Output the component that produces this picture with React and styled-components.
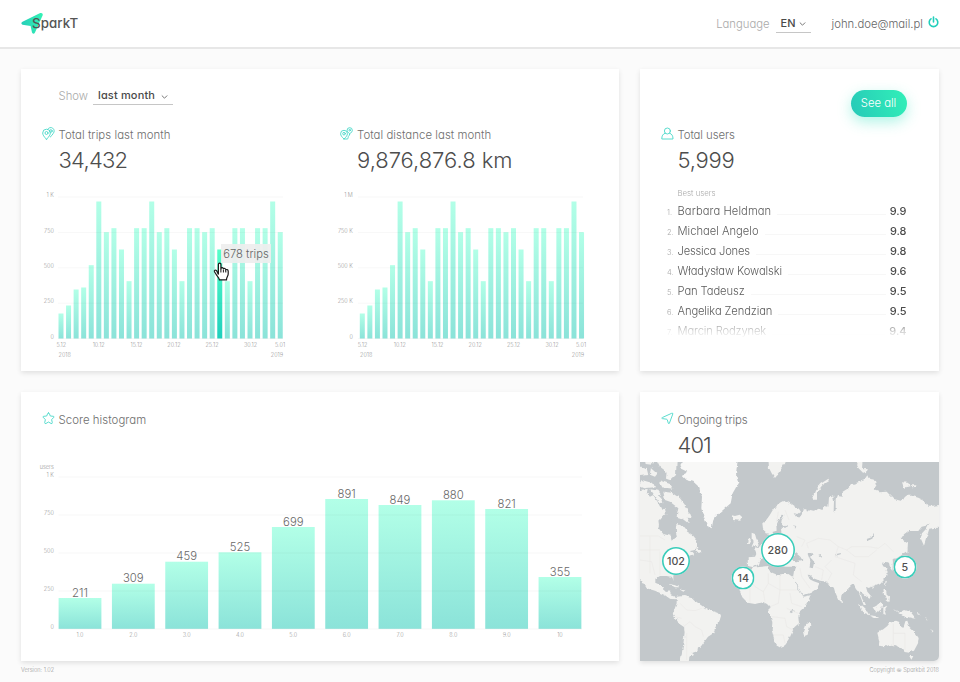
import React from "react";
import styled, { createGlobalStyle } from "styled-components";

const GlobalStyle = createGlobalStyle`
  * { box-sizing: border-box; }
  body {
    margin: 0;
    background: #fbfbfb;
    color: #777;
    font-family: Inter, "Open Sans", sans-serif;
    font-feature-settings: "cv11" 1;
    font-weight: 300;
    font-size: 11px;
    overflow: hidden;
  }
`;

const Page = styled.div`
  width: 960px;
  height: 682px;
  display: flex;
  flex-direction: column;
`;

const Header = styled.header`
  height: 49px;
  flex: none;
  display: flex;
  align-items: center;
  padding: 0 21px;
  background: #fff;
  border-bottom: 2px solid #e7e7e7;
`;

const Logo = styled.div`
  display: flex;
  align-items: center;
  height: 24px;
  margin-right: auto;
`;

const LogoMark = styled.svg`
  width: 23px;
  height: 23px;
  margin-right: -12px;
`;

const LogoText = styled.span`
  position: relative;
  top: -1px;
  color: #555;
  font-size: 13.3px;
  font-weight: 500;
  letter-spacing: 0.1px;
`;

const Label = styled.span`
  color: #aaa;
  font-size: 11.3px;
  letter-spacing: 0;
`;

const Select = styled.button`
  display: flex;
  align-items: center;
  justify-content: space-between;
  width: ${(p) => p.$width}px;
  height: 18px;
  margin-left: ${(p) => p.$gap}px;
  padding: 0 5px 1px 5px;
  border: 0;
  border-bottom: 1px solid #c6c6c6;
  background: none;
  color: #4a4a4a;
  font: 500 11px/16px Inter, sans-serif;
  font-feature-settings: "cv11" 1;
  letter-spacing: ${(p) => p.$spacing || "0"};
`;

const Chevron = styled.svg`
  width: 7px;
  height: 6px;
  margin-top: 3px;
  fill: none;
  stroke: #777;
`;

const Email = styled.span`
  margin-left: 21px;
  color: #666;
  font-size: 11.3px;
`;

const Power = styled.svg`
  width: 11px;
  height: 12px;
  margin: -3px 0 0 5px;
  fill: none;
  stroke: #22cfbb;
  stroke-width: 1.6;
  stroke-linecap: round;
`;

const Dashboard = styled.main`
  display: grid;
  grid-template-columns: 598px 299px;
  grid-template-rows: 301.5px 269.5px;
  gap: 21px;
  padding: 20px 21px 0;
`;

const Card = styled.section`
  background: #fff;
  box-shadow: 0 2px 5px rgba(0, 0, 0, 0.11);
`;

const MapCard = styled(Card)`
  border-radius: 0 0 5px 0;
  overflow: hidden;
`;

const FilterRow = styled.div`
  display: flex;
  align-items: center;
  height: 18px;
  margin: 18px 0 20px;
  padding-left: 37.5px;
`;

const ActionRow = styled.div`
  display: flex;
  justify-content: flex-end;
  padding: 21px 32.5px 8px 0;
`;

const SeeAll = styled.button`
  width: 56px;
  height: 27px;
  padding: 0;
  border: 0;
  border-radius: 14px;
  background: linear-gradient(70deg, #27c9b8, #31f0b8);
  box-shadow: 0 5px 14px rgba(48, 225, 190, 0.38);
  color: #fff;
  font: 300 11.3px/27px Inter, sans-serif;
  font-feature-settings: "cv11" 1;
`;

const Columns = styled.div`
  display: grid;
  grid-template-columns: 298.5px 299.5px;
`;

const Metric = styled.div`
  padding-top: ${(p) => p.$top || 0}px;
`;

const Heading = styled.h2`
  display: flex;
  align-items: center;
  height: 20px;
  margin: 0;
  padding-left: 20.5px;
  color: #6e6e6e;
  font-size: 11.4px;
  font-weight: 300;
  letter-spacing: ${(p) => p.$spacing || "0.05px"};
`;

const Icon = styled.svg`
  width: 13px;
  height: 13px;
  margin: -3px 4px 0 0;
  fill: none;
  stroke: #48d8c8;
  stroke-width: 0.9;
  stroke-linejoin: round;
  stroke-linecap: round;
`;

const Value = styled.div`
  height: 28px;
  margin-top: 1px;
  padding-left: 37.5px;
  color: #4d4d4d;
  font-size: 22px;
  font-weight: 350;
  line-height: 28px;
  letter-spacing: ${(p) => p.$spacing || "0"};
`;

const ChartBox = styled.div`
  position: relative;
  margin-top: ${(p) => p.$top}px;
`;

const ChartSvg = styled.svg`
  display: block;
  font-size: 5.5px;
  font-weight: 300;
  fill: #999;
`;

const GridLine = styled.line`
  stroke: #000;
  stroke-opacity: 0.03;
`;

const BarValue = styled.text`
  fill: #686868;
  font-size: 11.3px;
  text-anchor: middle;
`;

const Tooltip = styled.div`
  position: absolute;
  left: 200px;
  top: 62px;
  width: 50px;
  height: 19px;
  background: rgba(238, 238, 238, 0.92);
  color: #666;
  font-size: 11.2px;
  line-height: 21px;
  text-align: center;
  white-space: nowrap;
`;

const Pointer = styled.svg`
  position: absolute;
  left: 192px;
  top: 80px;
  width: 17px;
  height: 20px;
`;

const BestUsers = styled.div`
  margin: 14px 32.5px 0 22px;
  height: 153px;
  -webkit-mask-image: linear-gradient(#000 82%, transparent 98%);
  mask-image: linear-gradient(#000 82%, transparent 98%);
`;

const ListCaption = styled.div`
  padding-left: 15.5px;
  height: 13px;
  color: #aaa;
  font-size: 7.8px;
  line-height: 11px;
`;

const UserRow = styled.div`
  display: flex;
  align-items: baseline;
  height: 20px;
  line-height: 20px;
`;

const Rank = styled.span`
  width: 15.5px;
  padding-left: 5px;
  color: #aaa;
  font-size: 7.5px;
`;

const UserName = styled.span`
  color: #5c5c5c;
  font-size: 11.2px;
  letter-spacing: ${(p) => p.$spacing}px;
`;

const Leader = styled.span`
  flex: 1;
  margin: 0 4px 0 6px;
  border-bottom: 1px solid #f7f7f7;
`;

const Score = styled.span`
  color: #4a4a4a;
  font-size: 11px;
  font-weight: 500;
`;

const MapBox = styled.div`
  position: relative;
  margin-top: 3px;
  height: 199.5px;
  background: #c3c8cb;
`;

const MapSvg = styled.svg`
  display: block;
  width: 299px;
  height: 199px;
`;

const Land = styled.path`
  fill: ${(p) => (p.$ice ? "#f8f8f7" : "#f2f2f0")};
`;

const Water = styled.path`
  fill: #c3c8cb;
`;

const Border = styled.path`
  fill: none;
  stroke: #e9e7e5;
  stroke-width: 1.8;
`;

const Pin = styled.div`
  position: absolute;
  left: ${(p) => p.$x}px;
  top: ${(p) => p.$y}px;
  width: ${(p) => p.$size}px;
  height: ${(p) => p.$size}px;
  transform: translate(-50%, -50%);
  display: flex;
  align-items: center;
  justify-content: center;
  background: #fff;
  border-radius: 50%;
  box-shadow: inset 0 0 0 1.6px #3accb9;
  color: #505050;
  font-size: 10.7px;
  font-weight: 500;
`;

const Footer = styled.footer`
  display: flex;
  justify-content: space-between;
  padding: 5px 21px 0;
  color: #999;
  font-size: 5.6px;
  line-height: 8px;
`;

const Caret = () => (
  <Chevron viewBox="0 0 7 6"><path d="M.8 1.500 3.500 4.200 6.200 1.500" /></Chevron>
);

const TripsIcon = () => (
  <Icon viewBox="0 0 13 13">
    <path d="M4.500 12.300C1.900 9.600.700 7.900.700 6a3.800 3.800 0 0 1 7.600 0c0 1.900-1.200 3.600-3.800 6.300Z" />
    <circle cx="4.500" cy="6" r="1.500" />
    <path d="M5.600 2.300a3.500 3.500 0 1 1 5.700 4C10.600 7.700 9.600 8.900 8.300 10" />
    <circle cx="8.900" cy="4" r="1.300" />
  </Icon>
);

const DistanceIcon = () => (
  <Icon viewBox="0 0 13 13">
    <path d="M4 12C1.700 9.900.600 8.400.600 6.700a3.400 3.400 0 0 1 6.800 0c0 1.700-1.100 3.200-3.400 5.300Z" />
    <circle cx="4" cy="6.700" r="1.300" />
    <path d="M9.700 7C7.900 5.400 7.100 4.400 7.100 3.300a2.600 2.600 0 0 1 5.200 0c0 1.100-.8 2.100-2.600 3.700Z" />
    <circle cx="9.700" cy="3.200" r=".8" />
    <path d="M5 12h2.200c1.800 0 .3-2.600 1.700-3.200.7-.4.800-1 .8-1.500" />
  </Icon>
);

const UserIcon = () => (
  <Icon viewBox="0 0 13 13">
    <circle cx="6.400" cy="4" r="3" />
    <path d="M4.200 6.200C1.800 6.900.8 8.800.8 12h11.200c0-3.200-1-5.100-3.400-5.800" />
  </Icon>
);

const StarIcon = () => (
  <Icon viewBox="0 0 13 13">
    <path d="M6.500.900Q7.100.900 7.300 1.500L8.300 4 11.300 4.300Q12.600 4.600 11.700 5.600L9.600 7.500 10.300 10.600Q10.300 12 9.100 11.500L6.500 10 3.900 11.500Q2.700 12 2.700 10.600L3.400 7.500 1.300 5.600Q.4 4.600 1.700 4.300L4.700 4 5.700 1.500Q5.900.9 6.500.9Z" />
  </Icon>
);

const PlaneIcon = () => (
  <Icon viewBox="0 0 13 13">
    <path d="M11 1.200Q12.200.800 11.800 2L8.400 11.200Q7.900 12.400 7.300 11.200L6.300 7.800Q6.100 7.300 5.500 7.200L1.300 6.600Q0 6.200 1.200 5.600Z" />
  </Icon>
);

const tripTops = [
  400, 376, 328, 322, 255, 64, 156, 144, 208, 303, 144, 144, 64, 156, 144,
  208, 303, 144, 144, 156, 144, 208, 303, 144, 144, 303, 144, 144, 64, 156,
];

function DailyChart({ id, labels, barX, lineX, labelX, ticks, years, active }) {
  return (
    <ChartSvg width="299" height="185" viewBox="0 0 299 185">
      <defs>
        <linearGradient id={id} x1="0" y1="0" x2="0" y2="1">
          <stop stopColor="#b2ffe7" />
          <stop offset="1" stopColor="#8be3d9" />
        </linearGradient>
        <linearGradient id={id + "-active"} x1="0" y1="0" x2="0" y2="1">
          <stop stopColor="#57ffc9" />
          <stop offset="1" stopColor="#1fcfbc" />
        </linearGradient>
      </defs>
      {tripTops.map((t, i) => (
        <rect key={i} x={barX + i * 7.56} y={156.5 - (475 - t) / 3} width="5"
          height={(475 - t) / 3} fill={`url(#${id}${active === i ? "-active" : ""})`} />
      ))}
      {labels.map((l, i) => (
        <g key={l}>
          <GridLine x1={lineX} x2={lineX + 225} y1={15 + i * 35.4} y2={15 + i * 35.4} />
          <text x={labelX} y={15.300 + i * 35.3} textAnchor="end">{l}</text>
        </g>
      ))}
      {["5.12", "10.12", "15.12", "20.12", "25.12", "30.12", "5.01"].map((l, i) => (
        <text key={l} x={ticks[i]} y="164.500" textAnchor="middle">{l}</text>
      ))}
      <text x={years[0]} y="175.200">2018</text>
      <text x={years[1]} y="175.200" textAnchor="end">2019</text>
    </ChartSvg>
  );
}

const histogram = [
  [211, 598], [309, 583.7], [459, 561.7], [525, 552.3], [699, 527],
  [891, 499], [849, 505], [880, 500.3], [821, 509], [355, 577],
];

function Histogram() {
  return (
    <ChartSvg width="598" height="195" viewBox="0 0 598 195">
      <defs>
        <linearGradient id="score" x1="0" y1="0" x2="0" y2="1">
          <stop stopColor="#b2ffe7" />
          <stop offset="1" stopColor="#8be3d9" />
        </linearGradient>
      </defs>
      {histogram.map(([n, top], i) => (
        <g key={n}>
          <rect x={37.600 + i * 53.33} y={top - 455} width="42.800" height={628.800 - top} fill="url(#score)" />
          <BarValue x={59 + i * 53.33} y={top - 456.300}>{n}</BarValue>
          <text x={59 + i * 53.33} y="182" textAnchor="middle">{i === 9 ? "10" : `${i + 1}.0`}</text>
        </g>
      ))}
      <text x="32.800" y="14" textAnchor="end">users</text>
      {["1 K", "750", "500", "250", "0"].map((l, i) => (
        <g key={l}>
          <GridLine x1="37.500" x2="561" y1={22 + i * 38} y2={22 + i * 38} />
          <text x="32.800" y={22.300 + i * 37.9} textAnchor="end">{l}</text>
        </g>
      ))}
    </ChartSvg>
  );
}

/* Three map units per pixel; the origin sits over the North Atlantic. */
function WorldMap() {
  return (
    <MapSvg viewBox="-285 6 897 597">
      <defs>
        <filter id="coast" x="-5%" y="-5%" width="110%" height="110%">
          <feTurbulence type="fractalNoise" baseFrequency="0.06" numOctaves="3" seed="4" />
          <feDisplacementMap in="SourceGraphic" scale="11" xChannelSelector="R" yChannelSelector="G" />
        </filter>
      </defs>
      <g filter="url(#coast)">
        <Land d="M84 205 82 190 92 182 104 166 112 152 122 138 138 126 152 122 162 128 176 138 192 146 198 156 190 162 176 160 184 172 194 172 204 158 206 148 214 148 216 158 226 150 236 152 252 146 262 150 270 138 280 140 282 112 294 106 297 120 296 160 302 150 302 118 306 108 323 110 323 95 340 85 350 73 370 67 387 61 397 46 403 60 423 63 427 77 415 90 433 97 455 95 470 110 477 117 500 123 510 107 530 107 550 113 570 123 577 137 595 137 625 133V203L595 204 583 206 577 225 567 257 557 235 561 220 573 207 581 190 573 197 560 200 550 213 520 213 507 223 497 237 508 241 516 246 512 270 500 285 485 295 473 298 474 308 472 330 464 318 462 308 452 306 441 312 446 320 455 322 452 332 458 345 449 355 435 370 415 378 401 384 393 380 397 395 410 410 405 418 397 412 385 402 377 396 381 415 393 438 387 438 377 412 370 395 363 388 355 372 345 380 330 395 320 405 317 424 310 418 300 395 295 378 285 378 277 365 255 362 235 355 225 345 218 344 224 358 236 364 253 370 247 385 227 398 205 406 197 395 186 372 174 352 176 340 178 326 182 320 150 320 135 316 118 290 86 290 74 300 68 314 56 322 39 318 38 292 60 290 64 282 58 268 66 262 78 258 84 248 92 240 102 228 104 222 92 220Z" />
        <Land d="M66 322 50 325 40 335 24 350 16 366 14 392 22 412 38 428 60 432 84 426 96 432 104 440 100 450 108 470 112 490 110 510 116 532 124 556 134 562 150 556 160 542 170 520 178 502 192 490 190 468 196 452 212 438 228 410 226 406 206 410 198 400 188 382 178 362 172 350 160 342 142 342 128 345 112 338 102 330 100 318 82 320Z" />
        <Land d="M222 488 226 496 218 524 208 528 204 512 210 496ZM50 218 60 222 64 236 72 250 68 258 50 260 56 246 50 236ZM44 236 48 244 44 252 36 252 38 242ZM0 168 14 164 22 172 16 182-6 180-10 166ZM100 0H150L152 12 138 14 140 30 120 54 110 40 102 24ZM232 112 240 92 256 72 280 56 284 62 262 76 246 96 246 122 236 122ZM360 0H383L381 25 398 24 396 36 384 38 370 24ZM501 67 523 69 527 79 507 83ZM530 76 541 76 540 81 532 82ZM513 245 519 247 517 280 510 275Z" />
        <Land d="M445 388 453 390 455 404 465 412 463 424 455 418 447 404ZM369 428 380 438 395 452 403 466 391 462 377 446ZM401 466 420 468 433 474 420 474ZM413 442 427 438 437 422 443 434 435 455 421 454ZM445 445 457 440 449 452 453 464 445 462ZM477 448 495 458 510 450 527 456 543 476 523 472 507 470 491 460ZM318 419 325 422 321 428ZM452 364 456 368 450 376ZM410 379 418 380 413 387ZM545 459 557 463 549 464ZM570 474 580 480 575 481ZM585 508 596 516 590 517Z" />
        <Land d="M427 518 445 508 457 498 467 486 483 482 493 486 491 496 505 504 511 484 517 482 523 500 537 514 551 534 549 550 537 572 523 578 509 576 499 564 491 562 483 556 465 554 447 562 431 560 433 544ZM523 588 535 588 529 599Z" />
        <Land d="M-175 410-150 408-125 416-115 426-93 442-79 450-53 458-42 468-47 484-59 502-65 520-81 530-91 544-103 560-111 562-113 574-127 578-127 586-137 590-139 610H-165L-159 580-155 552-151 520-153 498-171 486-187 462-181 446-175 430Z" />
        <Land d="M-300 340-275 368-265 385-240 392-223 400-210 406-195 416-177 418-173 412-190 406-195 394-207 396-217 388-211 378-227 378-239 370-239 356-225 348-205 348-193 350-185 364-185 348-180 330-165 318-155 310-143 290-125 282-135 270-110 265-115 240-127 225-143 215-155 200-165 195-175 192-179 212-173 230-190 220-207 215-230 205-223 180-207 168-210 145-220 150-230 130-245 105-255 110-270 95-300 100Z" />
        <Land d="M-215 95-190 98-165 115-150 135-135 160-130 172-145 170-137 192-160 175-175 170-170 145-195 125-210 120ZM-235 0H-175L-177 45-193 60-207 55-205 35-225 20ZM-300 15-265 25-260 45-300 50ZM-280 60-245 70-240 82-275 85-290 78ZM-230 60-195 72-185 86-220 82ZM-252 22-232 40-240 50-255 44ZM-254 88-230 92-222 104-240 108ZM-285 92-262 90-264 100-285 104ZM-270 2-245 4-250 14-268 12ZM-240 104-222 112-218 130-232 122ZM-219 166-202 164-200 180-216 180ZM-197 372-183 374-167 382-180 382ZM-165 386-149 388-155 392ZM-119 270-103 270-101 278-115 278Z" />
        <Land $ice d="M-150 0H8L3 45 10 70-7 100-13 130-30 145-53 165-65 180-70 205-83 198-93 175-101 145-99 110-107 82-125 65-145 60-160 45-143 35-165 25Z" />
        <Water d="M-230 182-215 165-195 165-187 182-179 195-177 215-181 236-187 242-191 228-215 222-227 208ZM112 216 125 212 124 196 132 178 140 164 148 166 140 180 138 194 146 202 138 208 140 222 120 226ZM144 200 160 192 162 196 150 204ZM178 194 184 200 180 206ZM168 290 174 286 182 278 196 290 202 300 186 304 170 302ZM218 282 232 278 236 286 228 294 238 306 234 322 224 318 226 304ZM250 284 258 282 257 290ZM173 446 176 455 168 460 164 455ZM395 237 410 232 414 218 417 224 412 236 398 242ZM300 283 318 279 317 283 302 287Z" />
      </g>
      <Border d="M-285 228H-230L-210 240M-285 300-250 305-240 345M-255 230V340M-225 275V345M-285 270H-225M-165 430-145 450-120 452-100 445M-155 500-135 485-120 500-100 510-95 530M-145 600-145 520M-180 470-160 475M30 345 60 380 85 395 100 370V340M135 345V390H185M85 395 90 425M100 370 135 390 130 430 105 440M45 380V428M110 470 150 475 155 500 175 510M115 525 145 525 150 550M155 445 190 460M165 400 170 430 200 440M130 155 125 185M150 150 162 180M185 230 210 240 200 260M220 265 215 250 250 235 285 240 310 260 335 270 350 260 400 260 430 265 450 250 475 275M290 300 270 320 290 340 280 360M310 260 300 290 330 300 360 310 355 345 380 365M335 270 360 290 400 290 425 270M240 320 265 330 260 360M195 325 200 350 225 385M475 490V560M510 520H475M510 520V570" />
    </MapSvg>
  );
}

const users = [
  ["Barbara Heldman", "9.9", 0.08], ["Michael Angelo", "9.8", 0],
  ["Jessica Jones", "9.8", -0.2], ["Władysław Kowalski", "9.6", -0.1],
  ["Pan Tadeusz", "9.5", -0.08], ["Angelika Zendzian", "9.5", -0.12],
  ["Marcin Rodzynek", "9.4", -0.15],
];

export default function App() {
  return (
    <Page>
      <GlobalStyle />
      <Header>
        <Logo>
          <LogoMark viewBox="0 0 23 23">
            <defs>
              <linearGradient id="logo"><stop stopColor="#26ceb9" /><stop offset="1" stopColor="#34f2b5" /></linearGradient>
            </defs>
            <path d="M1.500 9.800 19.200 1.100Q22 .500 21.800 3L14 20.500Q12.500 23 11 20.500L9.600 14 1.500 12.700Q-.8 11.300 1.500 9.800Z" fill="url(#logo)" />
          </LogoMark>
          <LogoText>SparkT</LogoText>
        </Logo>
        <Label>Language</Label>
        <Select $width={35} $gap={6}>EN<Caret /></Select>
        <Email>john.doe@mail.pl</Email>
        <Power viewBox="0 0 11 12"><path d="M5.500 1v5M3 2.800a4.300 4.300 0 1 0 5 0" /></Power>
      </Header>
      <Dashboard>
        <Card>
          <FilterRow>
            <Label>Show</Label>
            <Select $width={80} $gap={5} $spacing="0.15px">last month<Caret /></Select>
          </FilterRow>
          <Columns>
            <Metric>
              <Heading><TripsIcon />Total trips last month</Heading>
              <Value $spacing="-0.75px">34,432</Value>
              <ChartBox $top={8}>
                <DailyChart id="trips" active={21} barX={37.5} lineX={37} labelX={32.8}
                  labels={["1 K", "750", "500", "250", "0"]}
                  ticks={[40.3, 77.7, 115.5, 153, 191, 229.500, 259]} years={[37.5, 262]} />
                <Tooltip>678 trips</Tooltip>
                <Pointer viewBox="0 0 17 20">
                  <path d="M5.400 12.500V2.600C5.400.6 7.900.6 7.900 2.600V7.800 6.400C8.500 5 10.400 5.400 10.400 7 10.900 5.900 12.800 6.300 12.800 8 13.400 7.100 15.200 7.500 15.200 9.200V12C15.200 14.200 13.500 15 13.500 17.800H6.400C6.200 15.500 3.900 13.900 2.900 12L1.500 9.800C.8 8.300 2.500 7.500 3.600 8.700Z" fill="#fff" stroke="#1a1a1a" strokeWidth="1.200" />
                  <path d="M7.900 7.500v3M10.400 7.500v3M12.800 8.500v2" stroke="#1a1a1a" />
                </Pointer>
              </ChartBox>
            </Metric>
            <Metric>
              <Heading><DistanceIcon />Total distance last month</Heading>
              <Value $spacing="-0.05px">9,876,876.8 km</Value>
              <ChartBox $top={8}>
                <DailyChart id="distance" barX={39.8} lineX={38} labelX={32.8}
                  labels={["1 M", "750 K", "500 K", "250 K", "0"]}
                  ticks={[42.500, 79.800, 117.500, 155.200, 193.500, 232, 261]} years={[40, 264]} />
              </ChartBox>
            </Metric>
          </Columns>
        </Card>
        <Card>
          <ActionRow><SeeAll>See all</SeeAll></ActionRow>
          <Heading $spacing="-0.1px"><UserIcon />Total users</Heading>
          <Value $spacing="-0.25px">5,999</Value>
          <BestUsers>
            <ListCaption>Best users</ListCaption>
            {users.map(([name, score, spacing], i) => (
              <UserRow key={name}>
                <Rank>{i + 1}.</Rank>
                <UserName $spacing={spacing}>{name}</UserName>
                <Leader />
                <Score>{score}</Score>
              </UserRow>
            ))}
          </BestUsers>
        </Card>
        <Card>
          <Metric $top={18.5}>
            <Heading><StarIcon />Score histogram</Heading>
            <ChartBox $top={25}><Histogram /></ChartBox>
          </Metric>
        </Card>
        <MapCard>
          <Metric $top={18.5}>
            <Heading $spacing="-0.1px"><PlaneIcon />Ongoing trips</Heading>
            <Value $spacing="-0.9px">401</Value>
          </Metric>
          <MapBox>
            <WorldMap />
            <Pin $x={36} $y={99} $size={28}>102</Pin>
            <Pin $x={103.2} $y={116.200} $size={23}>14</Pin>
            <Pin $x={137.7} $y={88.300} $size={34}>280</Pin>
            <Pin $x={264.700} $y={104.800} $size={23}>5</Pin>
          </MapBox>
        </MapCard>
      </Dashboard>
      <Footer><span>Version: 1.02</span><span>Copyright © Sparkbit 2018</span></Footer>
    </Page>
  );
}
